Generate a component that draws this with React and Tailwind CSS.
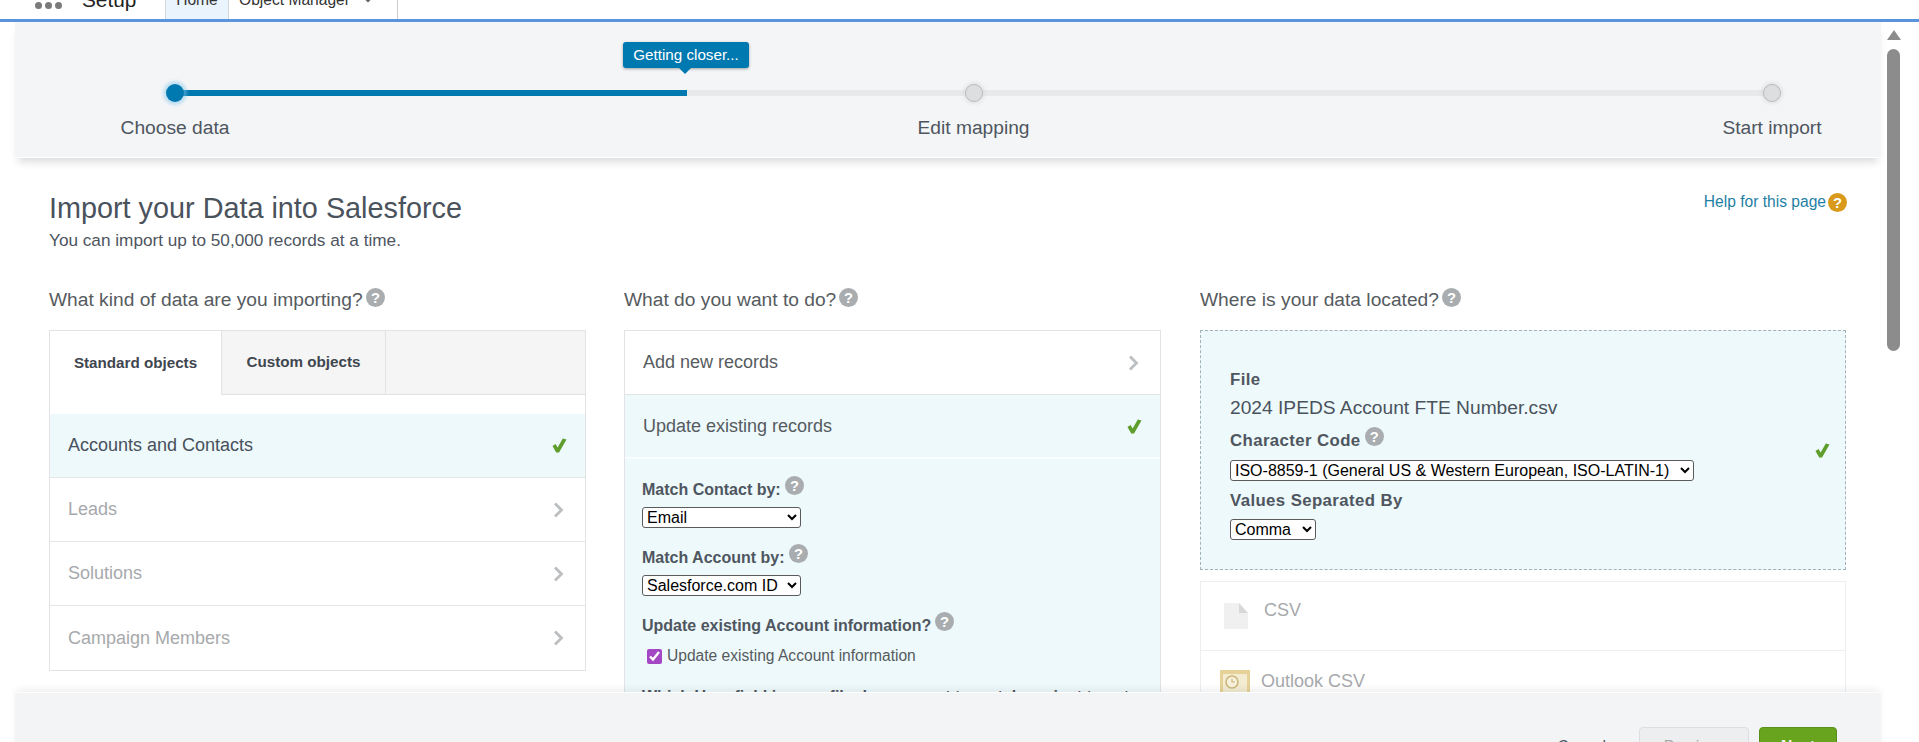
import { ChevronDown } from 'lucide-react';

const FONT = "font-['Liberation_Sans',Arial,sans-serif]";

function HelpIcon({ className = '', gold = false }) {
  return (
    <svg viewBox="0 0 18 18" className={`w-[19px] h-[19px] shrink-0 ${className}`}>
      <circle cx="9" cy="9" r="9" fill={gold ? '#d99a1c' : '#a9adb0'} />
      <text x="9" y="14" textAnchor="middle" fontSize="14" fontWeight="700" fontFamily="Liberation Sans, Arial, sans-serif" fill="#fff">?</text>
    </svg>
  );
}

function Chevron() {
  return (
    <svg viewBox="0 0 11 16" className="w-[11px] h-[16px]" fill="none">
      <path d="M2 1.5 L8.5 8 L2 14.5" stroke="#bcbfc1" strokeWidth="2.8" />
    </svg>
  );
}

function Check() {
  return (
    <svg viewBox="0 0 16 16" className="w-[15px] h-[15px]">
      <path d="M0.5 8.5 L3.8 6.5 L6 10 L11.5 0.5 L15.5 1.5 L7.5 15.5 L4.5 15.5 Z" fill="#5f9e2d" />
    </svg>
  );
}

function Step({ label, active }) {
  return (
    <div className="w-[200px] flex flex-col items-center relative">
      {active ? (
        <div className="w-[18px] h-[18px] rounded-full bg-[#0079b0] shadow-[0_0_3px_3px_rgba(130,200,235,0.45)]" />
      ) : (
        <div className="w-[18px] h-[18px] rounded-full bg-[#dcdee0] border border-[#b9bcbe] shadow-[0_0_3px_2px_rgba(215,215,215,0.5)]" />
      )}
      <div className="mt-[15px] text-[19.2px] leading-[22px] text-[#4e5560]">{label}</div>
    </div>
  );
}

function SectionTitle({ children }) {
  return (
    <div className="flex items-start gap-[3px] h-[22px] text-[19.2px] leading-[22px] text-[#565b60]">
      <span>{children}</span>
      <HelpIcon className="-mt-[1px]" />
    </div>
  );
}

function ObjectRow({ label, selected }) {
  return (
    <div className={`h-[64px] flex items-center justify-between pl-[18px] ${selected ? 'pr-[18px] bg-[#edf9fb] text-[#47505c]' : 'pr-[21px] text-[#a7a9ac]'} border-b border-[#e4e6e8] text-[18px]`}>
      <span>{label}</span>
      {selected ? <Check /> : <Chevron />}
    </div>
  );
}

function FieldLabel({ children, help = true, className = 'text-[16px]' }) {
  return (
    <div className={`flex items-start gap-[4px] h-[24px] leading-[24px] font-bold text-[#4f5660] ${className}`}>
      <span>{children}</span>
      {help && <HelpIcon className="-mt-[2px]" />}
    </div>
  );
}

function NativeSelect({ value, className }) {
  return (
    <select defaultValue={value} className={`block h-[21px] bg-white border border-[#5b5b5b] rounded-[3px] text-[16px] leading-[19px] text-black ${className}`}>
      <option>{value}</option>
    </select>
  );
}

export default function App() {
  return (
    <div className={`relative h-[742px] w-[1919px] overflow-hidden bg-white ${FONT}`}>
      {/* Setup nav, cut off by the top of the window */}
      <div className="h-[19px] overflow-hidden">
        <div className="-mt-[19px] h-[38px] flex items-stretch text-[#16325c]">
          <div className="ml-[35px] w-[47px] flex items-end gap-[3px] pb-[10px]">
            <span className="w-[7px] h-[7px] rounded-full bg-[#7a7a7a]" />
            <span className="w-[7px] h-[7px] rounded-full bg-[#7a7a7a]" />
            <span className="w-[7px] h-[7px] rounded-full bg-[#7a7a7a]" />
          </div>
          <div className="w-[83px] text-[20.8px] leading-[38px] text-[#222]">Setup</div>
          <div className="w-[64px] flex items-center justify-center bg-[#eaf4fd] border-x border-[#d4d8dc] text-[15.6px] text-[#333]">Home</div>
          <div className="w-[169px] flex items-center pl-[10px] gap-[12px] border-r border-[#c8ccd0] text-[15.6px] text-[#333]">
            <span>Object Manager</span>
            <ChevronDown className="w-[12px] h-[12px] text-[#666]" strokeWidth={3} />
          </div>
        </div>
      </div>
      <div className="h-[3px] bg-[#5a94dc]" />

      <div className="flex">
        <main className="w-[1887px] shrink-0">
          {/* Progress panel */}
          <div className="relative ml-[15px] w-[1866px] h-[136px] bg-[#f4f5f7] border-b border-white shadow-[0_7px_8px_-3px_rgba(0,0,0,0.14)] pt-[62px]">
            <div className="absolute left-[160px] top-[68px] w-[1597px] h-[6px] bg-[#e8e9eb]">
              <div className="w-[512px] h-[6px] bg-[#0079b0]" />
            </div>
            <div className="absolute left-[608px] top-[20px] w-[126px] h-[26px] rounded-[3px] bg-[#0079b0] shadow-[0_1px_3px_rgba(0,0,0,0.35)] text-white text-[15.2px] leading-[26px] text-center">
              Getting closer...
              <div className="absolute left-[56px] top-[26px] w-0 h-0 border-x-[6px] border-x-transparent border-t-[6px] border-t-[#0079b0]" />
            </div>
            <div className="relative flex justify-between pl-[60px] pr-[9px]">
              <Step label="Choose data" active />
              <Step label="Edit mapping" />
              <Step label="Start import" />
            </div>
          </div>

          <div className="pl-[49px] pr-[40px]">
            <div className="mt-[33px] flex justify-between items-start">
              <div>
                <h1 className="text-[28.8px] leading-[34px] text-[#4a525c]">Import your Data into Salesforce</h1>
                <p className="mt-[5px] text-[17.2px] leading-[20px] text-[#4e5560]">You can import up to 50,000 records at a time.</p>
              </div>
              <div className="mt-[1px] flex items-center gap-[2px] text-[15.6px] leading-[20px] text-[#1f7fa5]">
                <span>Help for this page</span>
                <HelpIcon gold />
              </div>
            </div>

            <div className="mt-[39px] grid grid-cols-[537px_537px_647px] gap-x-[38px]">
              {/* What kind of data */}
              <section>
                <SectionTitle>What kind of data are you importing?</SectionTitle>
                <div className="mt-[19px] border border-[#e1e3e5]">
                  <div className="flex h-[64px] text-[15.2px] font-bold text-[#3f4650]">
                    <div className="w-[172px] flex items-center justify-center border-r border-[#e1e3e5]">Standard objects</div>
                    <div className="w-[164px] flex items-center justify-center bg-[#f5f5f5] border-r border-b border-[#e1e3e5]">Custom objects</div>
                    <div className="flex-1 bg-[#f5f5f5] border-b border-[#e1e3e5]" />
                  </div>
                  <div className="pt-[19px]">
                    <ObjectRow label="Accounts and Contacts" selected />
                    <ObjectRow label="Leads" />
                    <ObjectRow label="Solutions" />
                    <div className="[&>div]:border-b-0">
                      <ObjectRow label="Campaign Members" />
                    </div>
                  </div>
                </div>
              </section>

              {/* What do you want to do */}
              <section>
                <SectionTitle>What do you want to do?</SectionTitle>
                <div className="mt-[19px] border border-[#e1e3e5]">
                  <div className="h-[64px] flex items-center justify-between pl-[18px] pr-[21px] border-b border-[#e1e3e5] text-[18px] text-[#565b60]">
                    <span>Add new records</span>
                    <Chevron />
                  </div>
                  <div className="bg-[#edf9fb]">
                    <div className="h-[64px] flex items-center justify-between pl-[18px] pr-[18px] border-b-2 border-white/60 text-[18px] text-[#565b60]">
                      <span>Update existing records</span>
                      <Check />
                    </div>
                    <div className="pl-[17px] pt-[19px] pb-[60px]">
                      <FieldLabel>Match Contact by:</FieldLabel>
                      <NativeSelect value="Email" className="mt-[5px] w-[159px]" />
                      <div className="mt-[18px]"><FieldLabel>Match Account by:</FieldLabel></div>
                      <NativeSelect value="Salesforce.com ID" className="mt-[5px] w-[159px]" />
                      <div className="mt-[18px]"><FieldLabel>Update existing Account information?</FieldLabel></div>
                      <label className="mt-[8px] ml-[5px] flex items-center gap-[5px] text-[15.6px] leading-[20px] text-[#565b60]">
                        <input type="checkbox" defaultChecked className="w-[15px] h-[15px] accent-[#a347c4]" />
                        <span>Update existing Account information</span>
                      </label>
                      <div className="mt-[19px] text-[16px] leading-[24px] font-bold text-[#4f5660] whitespace-nowrap">Which User field in your file do you want to match against to set</div>
                    </div>
                  </div>
                </div>
              </section>

              {/* Where is your data */}
              <section className="ml-px">
                <SectionTitle>Where is your data located?</SectionTitle>
                <div className="mt-[19px] h-[240px] flex items-center justify-between pl-[29px] pr-[15px] bg-[#edf9fb] border border-dashed border-[#9fb3b8]">
                  <div className="self-start pt-[37px]">
                    <FieldLabel help={false} className="text-[16.8px] tracking-[0.4px]">File</FieldLabel>
                    <div className="mt-[4px] h-[24px] text-[19.2px] leading-[24px] text-[#4a525c]">2024 IPEDS Account FTE Number.csv</div>
                    <div className="mt-[9px]"><FieldLabel className="text-[16.8px] tracking-[0.4px]">Character Code</FieldLabel></div>
                    <NativeSelect value="ISO-8859-1 (General US & Western European, ISO-LATIN-1)" className="mt-[7px] w-[464px]" />
                    <div className="mt-[8px]"><FieldLabel help={false} className="text-[16.8px] tracking-[0.4px]">Values Separated By</FieldLabel></div>
                    <NativeSelect value="Comma" className="mt-[6px] w-[86px]" />
                  </div>
                  <Check />
                </div>
                <div className="mt-[11px] border border-[#eceeef]">
                  <div className="h-[69px] flex items-start gap-[16px] pl-[23px] pt-[17px] border-b border-[#eceeef] text-[18px] leading-[22px] text-[#a7a9ac]">
                    <svg viewBox="0 0 24 26" className="w-[24px] h-[26px] mt-[4px]">
                      <path d="M0 0 H15 L24 10 V26 H0 Z" fill="#f0f0f0" />
                      <path d="M15 0 L24 10 H15 Z" fill="#d8d8d8" />
                    </svg>
                    <span>CSV</span>
                  </div>
                  <div className="h-[69px] flex items-start gap-[11px] pl-[19px] pt-[19px] text-[18px] leading-[22px] text-[#a7a9ac]">
                    <svg viewBox="0 0 30 30" className="w-[30px] h-[30px]">
                      <rect width="30" height="30" fill="#e6d296" />
                      <rect x="3" y="4" width="24" height="24" fill="#f3ecd2" />
                      <circle cx="12" cy="12" r="6" fill="#f7f1dc" stroke="#cdb678" strokeWidth="1.6" />
                      <path d="M12 9 V12 H15" fill="none" stroke="#cdb678" strokeWidth="1.2" />
                    </svg>
                    <span>Outlook CSV</span>
                  </div>
                </div>
              </section>
            </div>
          </div>
        </main>

        {/* Scroll bar */}
        <div className="w-[13px] pt-[8px] flex flex-col items-center">
          <div className="w-0 h-0 border-x-[7px] border-x-transparent border-b-[10px] border-b-[#8c8c8c]" />
          <div className="mt-[9px] w-[13px] h-[302px] rounded-full bg-[#8c8c8c]" />
        </div>
      </div>

      {/* Sticky footer */}
      <div className="absolute left-[15px] top-[692px] w-[1866px] h-[70px] bg-[#f3f4f6] shadow-[0_-4px_8px_-2px_rgba(0,0,0,0.08)] border-t border-white flex items-start justify-end pt-[34px] pr-[44px]">
        <span className="mt-[10px] mr-[33px] text-[15.6px] leading-[20px] text-[#4a525c]">Cancel</span>
        <button className="w-[110px] h-[40px] rounded-[4px] bg-[#eceef0] border border-[#dcdfe1] text-[15.6px] text-[#a7a9ac]">Previous</button>
        <button className="ml-[10px] w-[78px] h-[40px] rounded-[4px] bg-[#69a41f] border border-[#5a8f18] text-[15.6px] font-bold text-white">Next</button>
      </div>
    </div>
  );
}
